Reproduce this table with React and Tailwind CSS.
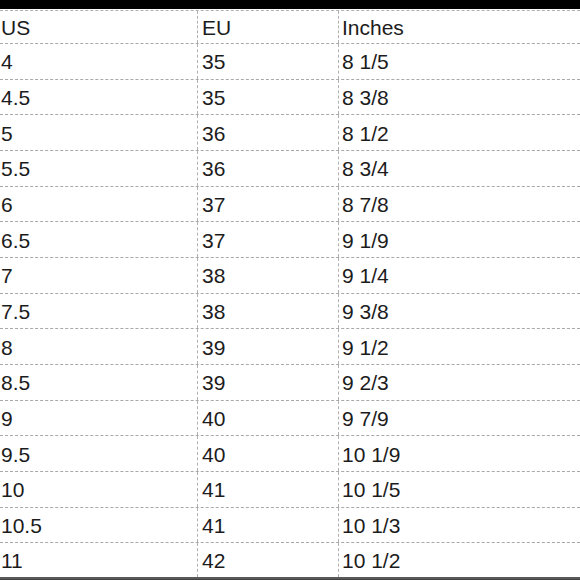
import React from "react";

const rows = [
  ["4", "35", "8 1/5"],
  ["4.5", "35", "8 3/8"],
  ["5", "36", "8 1/2"],
  ["5.5", "36", "8 3/4"],
  ["6", "37", "8 7/8"],
  ["6.5", "37", "9 1/9"],
  ["7", "38", "9 1/4"],
  ["7.5", "38", "9 3/8"],
  ["8", "39", "9 1/2"],
  ["8.5", "39", "9 2/3"],
  ["9", "40", "9 7/9"],
  ["9.5", "40", "10 1/9"],
  ["10", "41", "10 1/5"],
  ["10.5", "41", "10 1/3"],
  ["11", "42", "10 1/2"],
];

const Row = ({ cells, header, last }) => {
  const h = header ? "h-[33px]" : "h-[35.67px]";
  const b = last ? "border-b-2 border-solid border-b-[#5a5a5a]" : "border-b border-dashed border-b-[#a9a9a9]";
  return (
    <div className={`grid grid-cols-[198px_141px_1fr] ${h} ${b}`}>
      <div className="flex items-center pl-[1px] pt-[1px] border-r border-dashed border-r-[#b0b0b0]">{cells[0]}</div>
      <div className="flex items-center pl-[4px] pt-[1px] border-r border-dashed border-r-[#b0b0b0]">{cells[1]}</div>
      <div className="flex items-center pl-[3px] pt-[1px]">{cells[2]}</div>
    </div>
  );
};

const App = () => {
  return (
    <div
      className="w-[580px] h-[580px] overflow-hidden bg-white flex flex-col text-[21px] leading-none text-[#1c1c1c]"
      style={{ fontFamily: '"Liberation Sans", Arial, sans-serif' }}
    >
      <div className="h-[9px] bg-black shrink-0" />
      <div className="h-[1px] shrink-0" />
      <div className="border-t border-dashed border-t-[#b0b0b0]">
        <Row cells={["US", "EU", "Inches"]} header />
        {rows.map((r, i) => (
          <Row key={i} cells={r} last={i === rows.length - 1} />
        ))}
      </div>
      <div className="flex-1 bg-[#444]" />
    </div>
  );
};

export default App;
